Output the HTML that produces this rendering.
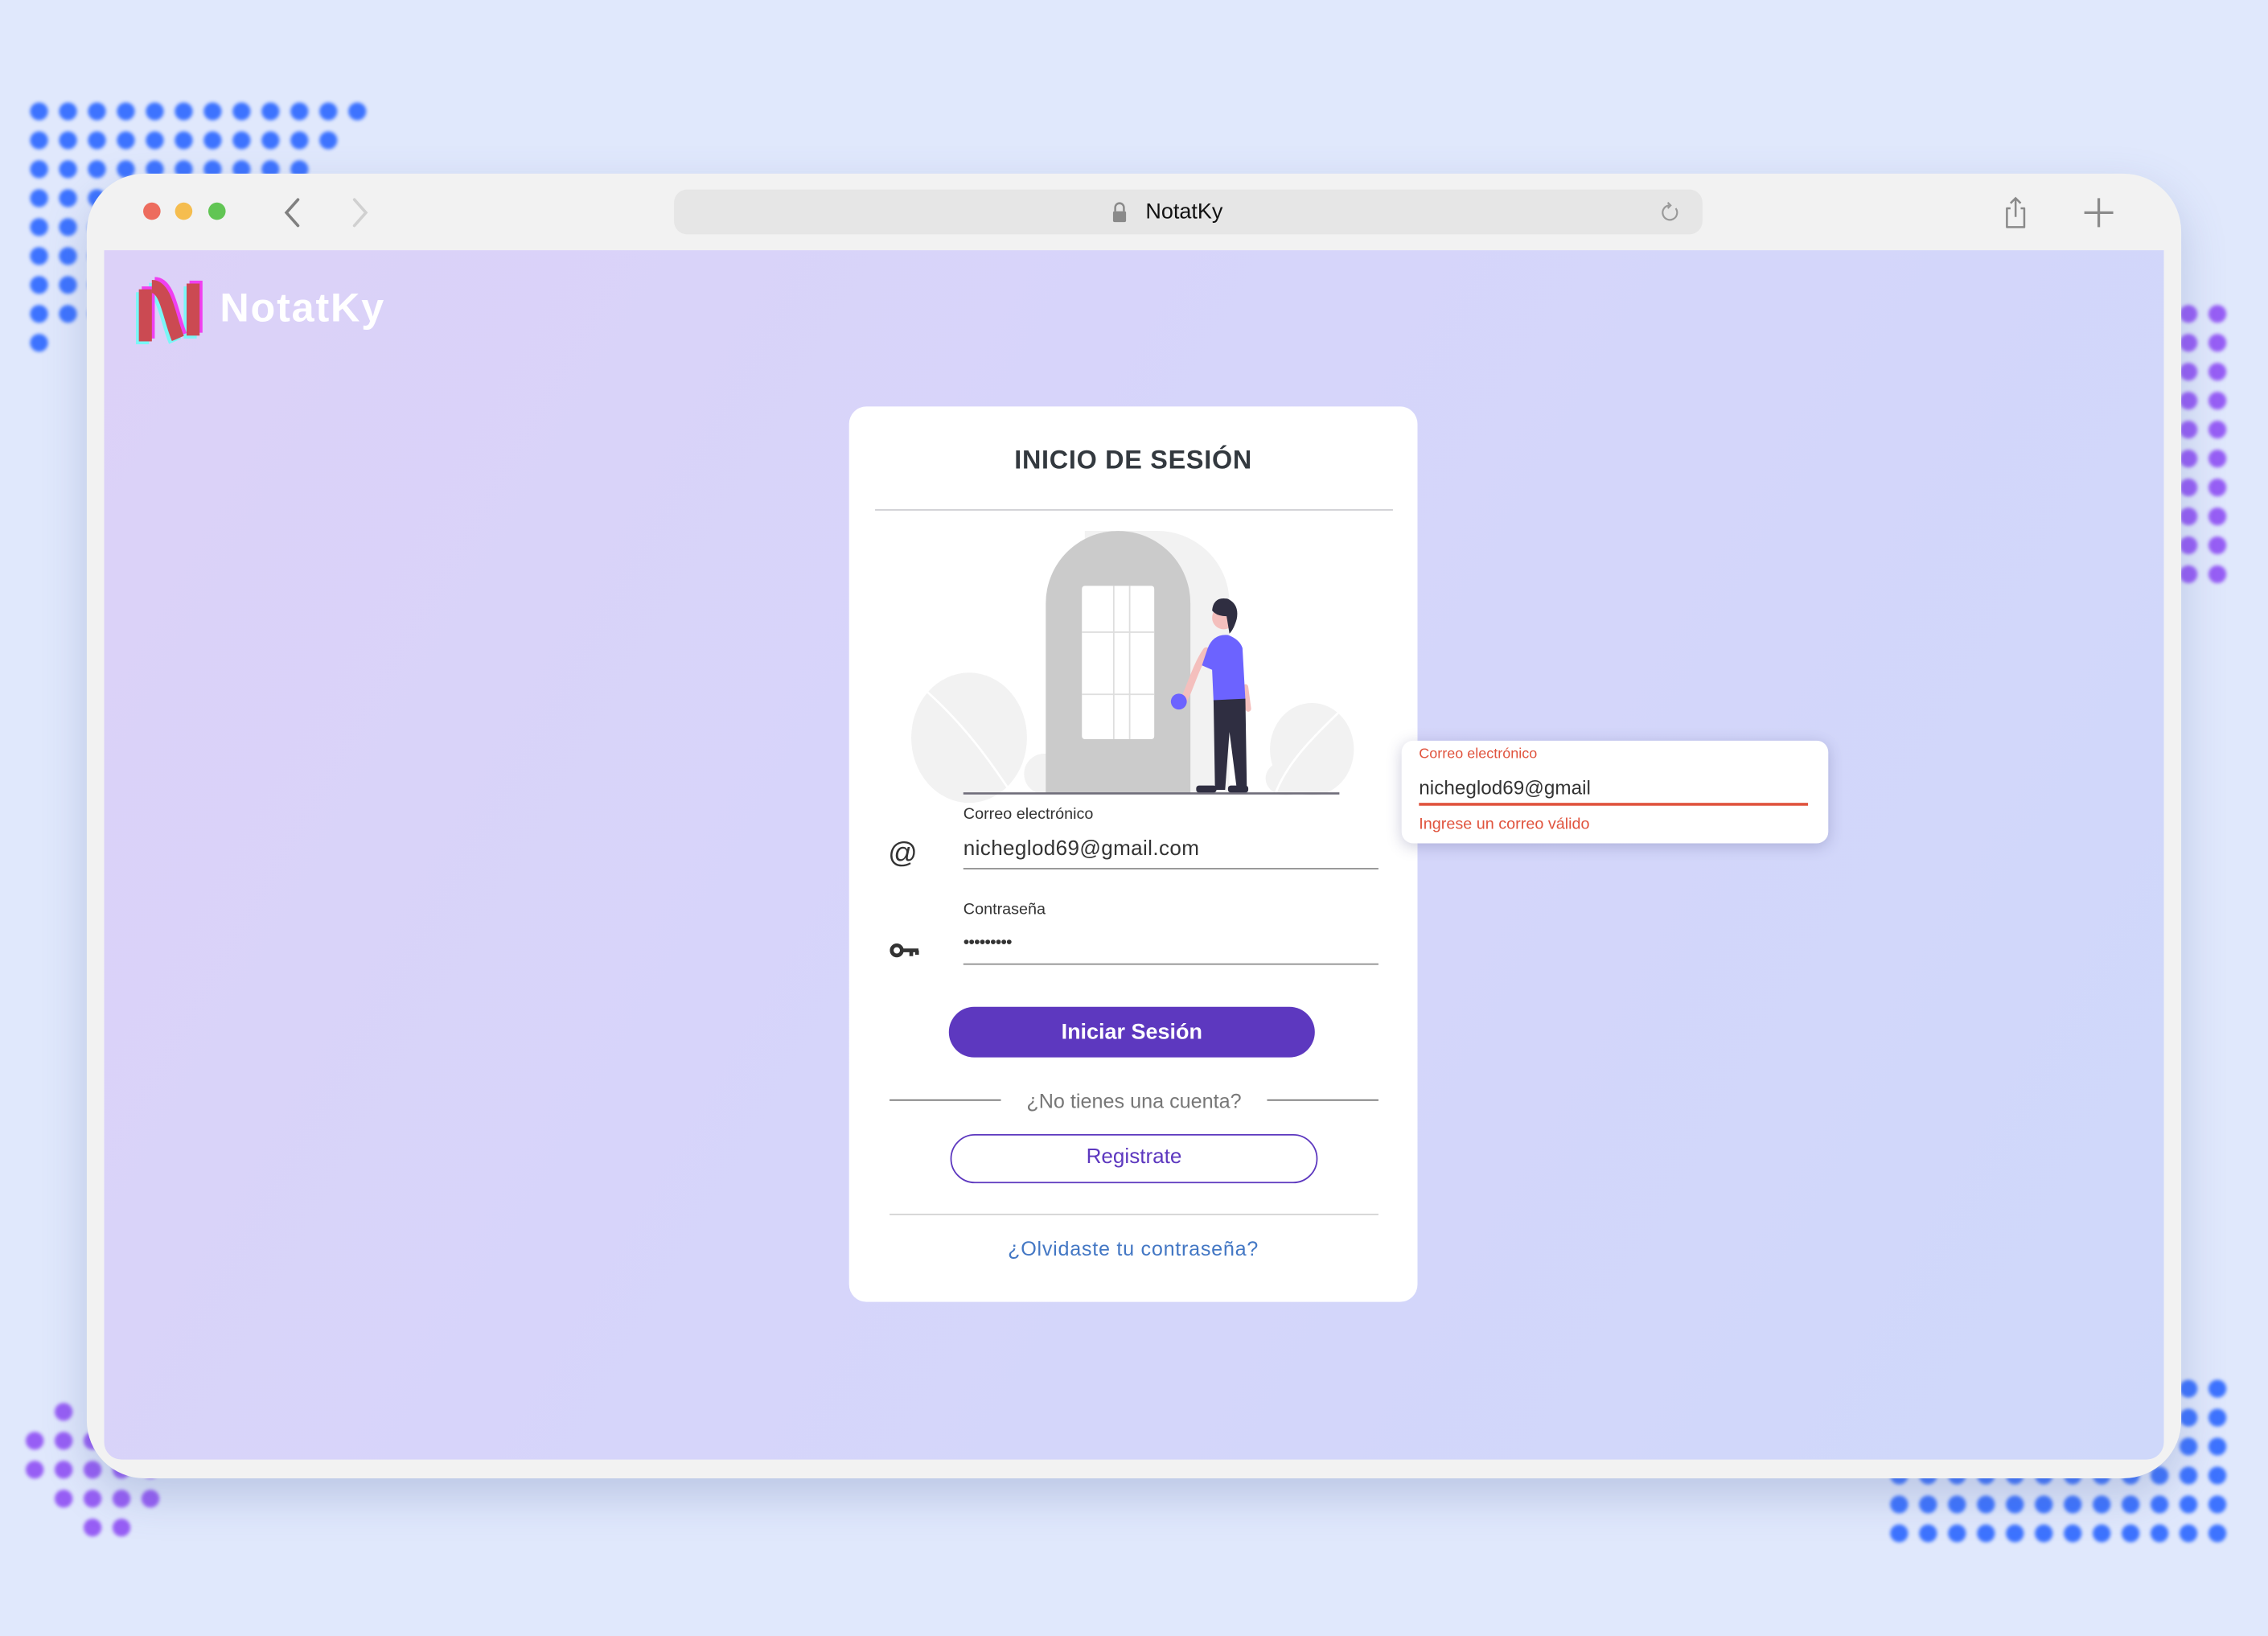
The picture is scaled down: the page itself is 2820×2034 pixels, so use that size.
<!DOCTYPE html>
<html><head><meta charset="utf-8">
<style>
html,body{margin:0;padding:0;width:2820px;height:2034px;overflow:hidden;background:#e0e8fc;}
#w{position:absolute;left:0;top:0;width:1568px;height:1131px;transform:scale(1.79847);transform-origin:0 0;font-family:"Liberation Sans",sans-serif;}
.abs{position:absolute;}
#browser{left:60px;top:120px;width:1448px;height:902px;background:#f2f2f2;border-radius:40px;box-shadow:0 12px 30px rgba(90,110,170,.28);}
#content{left:72px;top:173px;width:1424px;height:836px;background:linear-gradient(120deg,#dcd1f8 0%,#d6d5fa 45%,#cfd8fa 100%);border-radius:0 0 12px 12px;}
.tl{width:12px;height:12px;border-radius:50%;top:140px;}
#url{left:466px;top:131px;width:711px;height:31px;background:#e6e6e6;border-radius:9px;}
#card{left:587px;top:281px;width:393px;height:619px;background:#fff;border-radius:12px;}
.t{position:absolute;white-space:nowrap;}
</style></head><body>
<div id="w">
<svg class="abs" style="left:0;top:0;filter:blur(1.2px)" width="1568" height="1131">
<defs>
<pattern id="pb" width="20" height="20" patternUnits="userSpaceOnUse" x="17" y="67"><circle cx="10" cy="10" r="6.2" fill="#3d73ff"/></pattern>
<pattern id="pp" width="20" height="20" patternUnits="userSpaceOnUse" x="1503" y="207"><circle cx="10" cy="10" r="6.2" fill="#975ef5"/></pattern>
<pattern id="pb2" width="20" height="20" patternUnits="userSpaceOnUse" x="1303" y="950"><circle cx="10" cy="10" r="6.2" fill="#3d73ff"/></pattern>
<pattern id="pp2" width="20" height="20" patternUnits="userSpaceOnUse" x="14" y="966"><circle cx="10" cy="10" r="6.2" fill="#975ef5"/></pattern>
</defs>
<rect x="17" y="67" width="240" height="20" fill="url(#pb)"/>
<rect x="17" y="87" width="220" height="20" fill="url(#pb)"/>
<rect x="17" y="107" width="200" height="20" fill="url(#pb)"/>
<rect x="17" y="127" width="180" height="20" fill="url(#pb)"/>
<rect x="17" y="147" width="160" height="20" fill="url(#pb)"/>
<rect x="17" y="167" width="140" height="20" fill="url(#pb)"/>
<rect x="17" y="187" width="120" height="20" fill="url(#pb)"/>
<rect x="17" y="207" width="100" height="20" fill="url(#pb)"/>
<rect x="17" y="227" width="20" height="20" fill="url(#pb)"/>
<rect x="1443" y="207" width="100" height="200" fill="url(#pp)"/>
<rect x="1303" y="950" width="240" height="120" fill="url(#pb2)"/>
<rect x="34" y="966" width="20" height="20" fill="url(#pp2)"/>
<rect x="14" y="986" width="60" height="20" fill="url(#pp2)"/>
<rect x="14" y="1006" width="100" height="20" fill="url(#pp2)"/>
<rect x="34" y="1026" width="80" height="20" fill="url(#pp2)"/>
<rect x="54" y="1046" width="40" height="20" fill="url(#pp2)"/>
</svg>

<div id="browser" class="abs"></div>
<div id="content" class="abs"></div>
<div class="abs tl" style="left:99px;background:#ed6c5e"></div>
<div class="abs tl" style="left:121px;background:#f5bd4f"></div>
<div class="abs tl" style="left:144px;background:#61c554"></div>
<svg class="abs" style="left:190px;top:134px" width="70" height="26"><path d="M16 4 L8 13 L16 22" fill="none" stroke="#808080" stroke-width="2" stroke-linecap="round"/><path d="M55 4 L63 13 L55 22" fill="none" stroke="#d0d0d0" stroke-width="2" stroke-linecap="round"/></svg>
<div id="url" class="abs"></div>
<svg class="abs" style="left:768px;top:139px" width="12" height="16"><path d="M3 7 V4.5 A3 3 0 0 1 9 4.5 V7" fill="none" stroke="#8a8a8a" stroke-width="1.4"/><rect x="1.5" y="7" width="9" height="7.5" rx="1" fill="#8a8a8a"/></svg>
<div class="t" style="left:792px;top:138px;font-size:15px;color:#111">NotatKy</div>
<svg class="abs" style="left:1147px;top:139px" width="16" height="16"><path d="M11.5 5 A5 5 0 1 1 7 3" fill="none" stroke="#999" stroke-width="1.2"/><path d="M6 1 L8 3 L6 5" fill="none" stroke="#999" stroke-width="1.2"/></svg>
<svg class="abs" style="left:1383px;top:135px" width="22" height="24"><path d="M7 9 H4.5 V22 H16.5 V9 H14" fill="none" stroke="#8a8a8a" stroke-width="1.4" stroke-linejoin="round"/><path d="M10.5 15 V2 M7 5.5 L10.5 2 L14 5.5" fill="none" stroke="#8a8a8a" stroke-width="1.4"/></svg>
<svg class="abs" style="left:1440px;top:136px" width="22" height="22"><path d="M11 1 V21 M1 11 H21" stroke="#8a8a8a" stroke-width="1.8"/></svg>

<svg class="abs" style="left:93px;top:190px" width="50" height="50">
<g transform="translate(-2,2)"><rect x="3" y="10" width="9" height="36" fill="#7af7f7"/><path d="M12 8 C22 8,24 30,30 44" stroke="#7af7f7" stroke-width="9" fill="none"/><rect x="36" y="6" width="9" height="36" fill="#7af7f7"/></g>
<g transform="translate(2,-2)"><rect x="3" y="10" width="9" height="36" fill="#f03ff0"/><path d="M12 8 C22 8,24 30,30 44" stroke="#f03ff0" stroke-width="9" fill="none"/><rect x="36" y="6" width="9" height="36" fill="#f03ff0"/></g>
<rect x="3" y="10" width="9" height="36" fill="#cb4a52"/><path d="M12 8 C22 8,24 30,30 44" stroke="#cb4a52" stroke-width="9" fill="none"/><rect x="36" y="6" width="9" height="36" fill="#cb4a52"/>
</svg>
<div class="t" style="left:152px;top:197px;font-size:28px;font-weight:bold;color:#fff;letter-spacing:1px">NotatKy</div>

<div id="card" class="abs"></div>
<div class="t" style="left:587px;width:393px;text-align:center;top:308px;font-size:18px;font-weight:bold;color:#33393f;letter-spacing:0.4px">INICIO DE SESIÓN</div>
<div class="abs" style="left:605px;top:352px;width:358px;height:1px;background:#cfcfd3"></div>

<svg class="abs" style="left:587px;top:360px" width="393" height="195">
<ellipse cx="83" cy="150" rx="40" ry="45" fill="#f2f2f2"/>
<path d="M48 113 C80 140,100 170,112 188" stroke="#fff" stroke-width="1.5" fill="none"/>
<ellipse cx="135" cy="175" rx="14" ry="14" fill="#f2f2f2"/>
<ellipse cx="320" cy="158" rx="29" ry="32" fill="#f2f2f2"/>
<ellipse cx="302" cy="178" rx="14" ry="12" fill="#f2f2f2"/>
<path d="M338 133 C315 155,302 170,295 188" stroke="#fff" stroke-width="1.5" fill="none"/>
<path d="M163 7 H213 A50 50 0 0 1 263 57 V188 H163 Z" fill="#f2f2f2"/>
<path d="M136 188 V57 A50 50 0 0 1 236 57 V188 Z" fill="#cbcbcb"/>
<rect x="161" y="45" width="50" height="106" rx="2" fill="#fff"/>
<path d="M183 45 V151 M194 45 V151 M161 77 H211 M161 120 H211" stroke="#dedede" stroke-width="1"/>
<path d="M247 90 C240 100,236 115,231 125" stroke="#f4bfbd" stroke-width="5" fill="none" stroke-linecap="round"/>
<circle cx="228" cy="125" r="5.5" fill="#6c63ff"/>
<path d="M274 115 L276 130" stroke="#f4bfbd" stroke-width="4" stroke-linecap="round"/>
<path d="M248 88 Q252 78,262 79 Q270 82,272 88 L274 124 L252 125 L251 103 L244 100 Z" fill="#6c63ff"/>
<circle cx="259" cy="67" r="8" fill="#f4bfbd"/>
<path d="M251 62 Q252 52,262 54 Q270 58,268 68 Q266 75,263 78 L261 66 Q254 66,251 62 Z" fill="#2f2e41"/>
<path d="M252 124 L274 123 L275 185 L268 185 L263 146 L260 186 L253 186 Z" fill="#2f2e41"/>
<rect x="240" y="183" width="14" height="5" rx="2" fill="#2f2e41"/>
<rect x="262" y="183" width="14" height="5" rx="2" fill="#2f2e41"/>
<path d="M79 188.5 H339" stroke="#6f6d7a" stroke-width="1.5"/>
</svg>

<div class="t" style="left:666px;top:557px;font-size:11px;color:#333">Correo electrónico</div>
<div class="t" style="left:614px;top:579px;font-size:20px;color:#333">@</div>
<div class="t" style="left:666px;top:579px;font-size:14.5px;color:#333;letter-spacing:0.2px">nicheglod69@gmail.com</div>
<div class="abs" style="left:666px;top:600px;width:287px;height:1px;background:#8f8f8f"></div>
<div class="t" style="left:666px;top:623px;font-size:11px;color:#333">Contraseña</div>
<svg class="abs" style="left:615px;top:650px" width="22" height="14"><circle cx="5" cy="7" r="3.5" fill="none" stroke="#333" stroke-width="2.6"/><path d="M8 7 H20 M15 7 V11 M19 7 V10" stroke="#333" stroke-width="2.6"/></svg>
<div class="t" style="left:666px;top:644px;font-size:12px;color:#333;letter-spacing:-0.5px">•••••••••</div>
<div class="abs" style="left:666px;top:666px;width:287px;height:1px;background:#8f8f8f"></div>

<div class="abs" style="left:656px;top:696px;width:253px;height:35px;background:#5d38bf;border-radius:18px;"></div>
<div class="t" style="left:656px;width:253px;text-align:center;top:705px;font-size:15px;font-weight:bold;color:#fff">Iniciar Sesión</div>

<div class="abs" style="left:615px;top:760px;width:77px;height:1px;background:#777"></div>
<div class="abs" style="left:876px;top:760px;width:77px;height:1px;background:#777"></div>
<div class="t" style="left:692px;width:184px;text-align:center;top:753px;font-size:14px;color:#777">¿No tienes una cuenta?</div>

<div class="abs" style="left:657px;top:784px;width:252px;height:32px;border:1px solid #5d38bf;border-radius:17px;"></div>
<div class="t" style="left:658px;width:252px;text-align:center;top:792px;font-size:14.5px;color:#5d38bf">Registrate</div>
<div class="abs" style="left:615px;top:839px;width:338px;height:1px;background:#d2d2d2"></div>
<div class="t" style="left:587px;width:393px;text-align:center;top:855px;font-size:14px;color:#4377c4;letter-spacing:0.4px">¿Olvidaste tu contraseña?</div>

<div class="abs" style="left:969px;top:512px;width:295px;height:71px;background:#fff;border-radius:8px;box-shadow:0 2px 10px rgba(60,60,120,.25)"></div>
<div class="t" style="left:981px;top:516px;font-size:10px;color:#e0533d">Correo electrónico</div>
<div class="t" style="left:981px;top:537px;font-size:13.5px;color:#333">nicheglod69@gmail</div>
<div class="abs" style="left:981px;top:555px;width:269px;height:2px;background:#e0533d"></div>
<div class="t" style="left:981px;top:564px;font-size:11px;color:#e0533d">Ingrese un correo válido</div>
</div>
</body></html>
